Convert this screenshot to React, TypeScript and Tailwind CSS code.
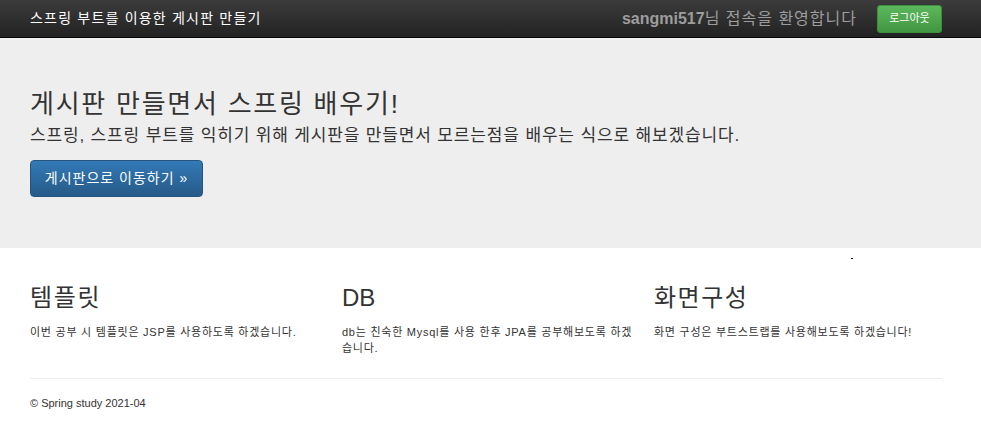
import React from 'react';

const font = "font-['Liberation_Sans','Noto_Sans_CJK_KR',sans-serif]";

export default function App() {
  return (
    <div className={`min-h-[428px] bg-white text-[#333] ${font}`}>
      {/* navbar */}
      <div className="h-[38px] border-b border-[#080808] bg-gradient-to-b from-[#3c3c3c] to-[#222]">
        <div className="mx-[30px] flex h-[37px] w-[912px] items-center justify-between">
          <span className="text-[14px] tracking-[1.2px] text-white">스프링 부트를 이용한 게시판 만들기</span>
          <div className="flex items-center">
            <span className="text-[16px] text-[#9d9d9d]">
              <b>sangmi517</b>
              <span className="tracking-[1px]">님 접속을 환영합니다</span>
            </span>
            <button className="ml-[20px] h-[28px] w-[65px] rounded-[3px] border border-[#3e8f3e] bg-gradient-to-b from-[#5cb85c] to-[#419641] text-[11px] text-white">
              로그아웃
            </button>
          </div>
        </div>
      </div>

      {/* jumbotron */}
      <div className="h-[210px] bg-[#eee]">
        <div className="mx-[30px] pt-[51px]">
          <h1 className="text-[26px] leading-[30px] tracking-[1.75px]">게시판 만들면서 스프링 배우기!</h1>
          <p className="mt-[6px] text-[17px] leading-[22px] tracking-[0.85px]">
            스프링, 스프링 부트를 익히기 위해 게시판을 만들면서 모르는점을 배우는 식으로 해보겠습니다.
          </p>
          <button className="mt-[13px] h-[37px] w-[173px] rounded-[4px] border border-[#245580] bg-gradient-to-b from-[#337ab7] to-[#265a88] text-[14px] tracking-[1px] text-white">
            게시판으로 이동하기 »
          </button>
        </div>
      </div>

      <div className="relative mx-[30px] w-[912px]">
        <span className="absolute left-[821px] top-[10px] h-[1px] w-[2px] bg-[#0000c0]" />
        <div className="grid grid-cols-[296px_296px_296px] gap-x-[16px] pt-[36px]">
          <div>
            <h2 className="text-[24px] leading-[28px] tracking-[1.7px]">템플릿</h2>
            <p className="mt-[12px] text-[11px] leading-[16px] tracking-[0.75px]">이번 공부 시 템플릿은 JSP를 사용하도록 하겠습니다.</p>
          </div>
          <div>
            <h2 className="text-[24px] leading-[28px]">DB</h2>
            <p className="mt-[12px] text-[11px] leading-[16px] tracking-[0.75px]">db는 친숙한 Mysql를 사용 한후 JPA를 공부해보도록 하겠습니다.</p>
          </div>
          <div>
            <h2 className="text-[24px] leading-[28px] tracking-[1.5px]">화면구성</h2>
            <p className="mt-[12px] text-[11px] leading-[16px] tracking-[0.75px]">화면 구성은 부트스트랩를 사용해보도록 하겠습니다!</p>
          </div>
        </div>
        <hr className="mt-[22px] border-t border-[#eee]" />
        <p className="mt-[16px] text-[11px] leading-[16px]">© Spring study 2021-04</p>
      </div>
    </div>
  );
}
